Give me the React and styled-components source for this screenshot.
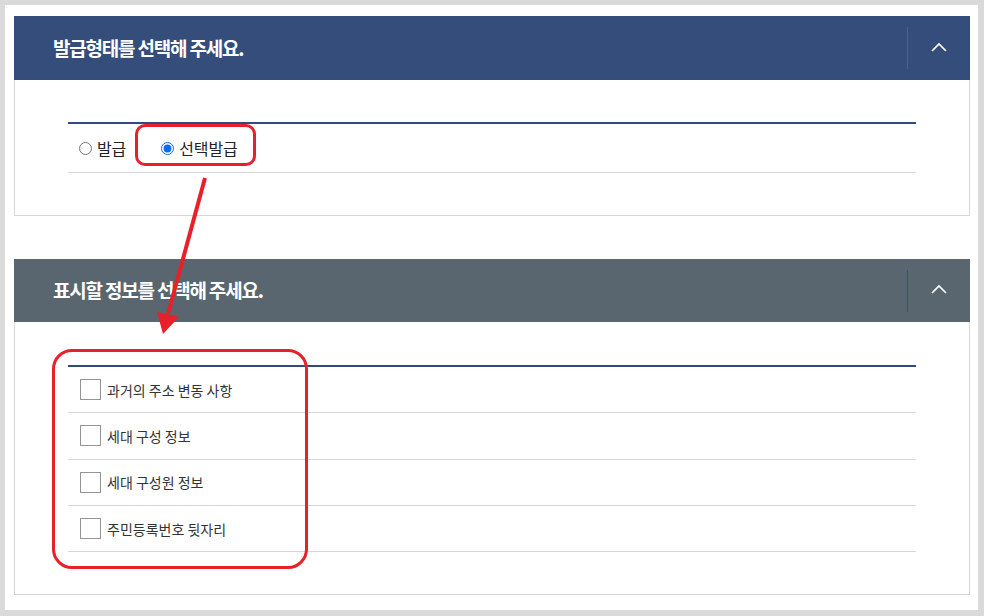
import styled, { createGlobalStyle } from "styled-components";

const GlobalStyle = createGlobalStyle`
	body {
		margin: 0;
		background: #dadada;
		font-family: "Noto Sans CJK KR", "Noto Sans", sans-serif;
	}
	* {
		box-sizing: border-box;
	}
`;

const chevronUp = (
	<svg width="16" height="10" viewBox="0 0 16 10">
		<polyline
			points="1,9 8,2 15,9"
			fill="none"
			stroke="#ffffff"
			strokeWidth="1.7"
		/>
	</svg>
);

const infoItems = [
	"과거의 주소 변동 사항",
	"세대 구성 정보",
	"세대 구성원 정보",
	"주민등록번호 뒷자리",
];

function App() {
	return (
		<Frame>
			<GlobalStyle />
			<Canvas>
				<Panel>
					<Header $bg="#344d7a" $line="#4b6290">
						<Title>발급형태를 선택해 주세요.</Title>
						<Toggle>{chevronUp}</Toggle>
					</Header>
					<Body>
						<List>
							<RadioRow>
								<Choice>
									<Radio type="radio" name="issue" />
									발급
								</Choice>
								<Choice>
									<Radio type="radio" name="issue" defaultChecked />
									선택발급
								</Choice>
							</RadioRow>
						</List>
					</Body>
				</Panel>
				<Panel>
					<Header $bg="#59666f" $line="#3d5177" $height={63}>
						<Title>표시할 정보를 선택해 주세요.</Title>
						<Toggle>{chevronUp}</Toggle>
					</Header>
					<Body $pad={43}>
						<List>
							{infoItems.map((item) => (
								<CheckRow key={item}>
									<Check type="checkbox" />
									{item}
								</CheckRow>
							))}
						</List>
					</Body>
				</Panel>
			</Canvas>

			<Highlight style={{ left: 135, top: 124, width: 121, height: 42 }} $radius={10} />
			<Highlight style={{ left: 52, top: 349, width: 256, height: 220 }} $radius={20} />
			<Arrow width="984" height="616" viewBox="0 0 984 616">
				<line x1="205" y1="178" x2="168" y2="314" stroke="#e8202a" strokeWidth="4" />
				<polygon points="163,334 179,317 157,312" fill="#e8202a" />
			</Arrow>
		</Frame>
	);
}

export default App;

const Frame = styled.div`
	position: relative;
	width: 984px;
	height: 616px;
	padding: 5px 6px 6px 5px;
	background: #dadada;
`;

const Canvas = styled.div`
	height: 100%;
	background: #ffffff;
	padding: 11px 8px 0 9px;
`;

const Panel = styled.section`
	& + & {
		margin-top: 43px;
	}
`;

const Header = styled.div`
	display: flex;
	align-items: center;
	height: ${(p) => p.$height || 64}px;
	background: ${(p) => p.$bg};

	& > button {
		border-left: 1px solid ${(p) => p.$line};
	}
`;

const Title = styled.h2`
	flex: 1;
	margin: 0 0 2px;
	padding-left: 39px;
	color: #ffffff;
	font-size: 19px;
	font-weight: 700;
	letter-spacing: -1.2px;
`;

const Toggle = styled.button`
	display: flex;
	align-items: center;
	justify-content: center;
	width: 63px;
	height: 42px;
	padding: 0 0 3px;
	background: none;
	border: none;
	cursor: pointer;
`;

const Body = styled.div`
	padding: ${(p) => p.$pad || 42}px 53px 42px;
	border: 1px solid #d6d6d6;
	border-top: none;
`;

const List = styled.div`
	border-top: 2px solid #33497a;
`;

const RadioRow = styled.div`
	display: flex;
	align-items: center;
	gap: 35px;
	height: 49px;
	padding-left: 11px;
	border-bottom: 1px solid #d6d6d6;
`;

const Choice = styled.label`
	display: flex;
	align-items: center;
	gap: 5px;
	font-size: 16px;
	color: #222222;
	letter-spacing: -0.1px;
`;

const Radio = styled.input`
	width: 13px;
	height: 13px;
	margin: 0;
	accent-color: #0b6cf0;
`;

const CheckRow = styled.label`
	display: flex;
	align-items: center;
	gap: 6px;
	height: 46.3px;
	padding-left: 12px;
	border-bottom: 1px solid #d6d6d6;
	font-size: 14px;
	color: #333333;
	letter-spacing: 0;
`;

const Check = styled.input`
	appearance: none;
	width: 21px;
	height: 21px;
	margin: 0;
	background: #ffffff;
	border: 1px solid #949494;
`;

const Highlight = styled.div`
	position: absolute;
	border: 3px solid #e8202a;
	border-radius: ${(p) => p.$radius}px;
	pointer-events: none;
`;

const Arrow = styled.svg`
	position: absolute;
	left: 0;
	top: 0;
	pointer-events: none;
`;
